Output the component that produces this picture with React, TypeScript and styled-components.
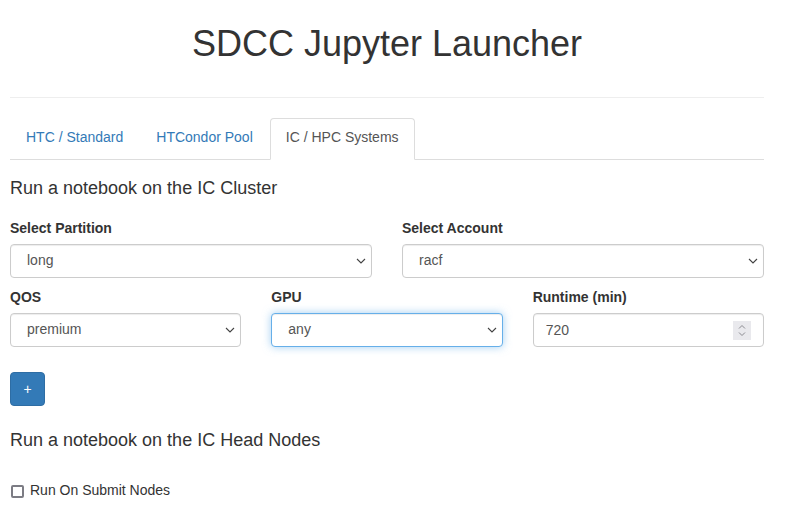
import React from "react";
import styled, { createGlobalStyle, css } from "styled-components";

const Global = createGlobalStyle`
  html, body { margin: 0; padding: 0; background: #fff; }
  body {
    font-family: "Liberation Sans", Arial, sans-serif;
    font-size: 14px;
    line-height: 1.42857;
    color: #333;
  }
  * { box-sizing: border-box; }
`;

const chevron =
  "url(\"data:image/svg+xml;utf8,<svg xmlns='http://www.w3.org/2000/svg' width='10' height='6' viewBox='0 0 10 6'><path d='M1 1l4 4 4-4' fill='none' stroke='%23444' stroke-width='1.1'/></svg>\")";

const Container = styled.div`
  width: 754px;
  margin-left: 10px;
`;

const Title = styled.h1`
  margin: 24px 0 0;
  font-size: 36px;
  font-weight: 500;
  line-height: 40px;
  text-align: center;
  color: #333;
`;

const Rule = styled.hr`
  margin: 33px 0 20px;
  border: 0;
  border-top: 1px solid #eee;
  height: 0;
`;

const Tabs = styled.ul`
  list-style: none;
  margin: 0;
  padding: 0;
  display: flex;
  border-bottom: 1px solid #ddd;
`;

const Tab = styled.li<{ $active?: boolean }>`
  margin: 0 1px -1px 0;
  a {
    display: block;
    padding: 8px 15px 12px;
    line-height: 20px;
    border: 1px solid transparent;
    border-radius: 4px 4px 0 0;
    color: #337ab7;
    text-decoration: none;
    ${(p) =>
      p.$active &&
      css`
        color: #555;
        background: #fff;
        border-color: #ddd #ddd transparent;
      `}
  }
`;

const Section = styled.h4`
  margin: 18px 0 20px;
  font-size: 18px;
  font-weight: 500;
  line-height: 20px;
`;

const Row = styled.div<{ $cols: number }>`
  display: grid;
  grid-template-columns: repeat(${(p) => p.$cols}, 1fr);
  column-gap: 30px;
  margin-bottom: 9px;
`;

const Label = styled.label`
  display: block;
  font-weight: 700;
  margin-bottom: 6px;
  line-height: 20px;
`;

const controlBase = css`
  display: block;
  width: 100%;
  height: 34px;
  font-family: "Liberation Sans", Arial, sans-serif;
  font-size: 14px;
  color: #555;
  background-color: #fff;
  border: 1px solid #ccc;
  border-radius: 4px;
  box-shadow: inset 0 1px 1px rgba(0, 0, 0, 0.075);
  outline: none;
`;

const Select = styled.select<{ $focused?: boolean }>`
  ${controlBase}
  appearance: none;
  -webkit-appearance: none;
  padding: 5px 24px 7px 16px;
  background-image: ${chevron};
  background-repeat: no-repeat;
  background-position: right 5px center;
  background-size: 10px 6px;
  ${(p) =>
    p.$focused &&
    css`
      border-color: #66afe9;
      box-shadow: inset 0 1px 1px rgba(0, 0, 0, 0.075), 0 0 8px rgba(102, 175, 233, 0.6);
    `}
`;

const NumberBox = styled.div`
  ${controlBase}
  display: flex;
  align-items: center;
  padding: 0 12px 0 12px;
`;

const NumberInput = styled.input`
  flex: 1;
  min-width: 0;
  border: 0;
  outline: none;
  padding: 0;
  font-family: "Liberation Sans", Arial, sans-serif;
  font-size: 14px;
  color: #555;
  background: transparent;
  appearance: textfield;
  -moz-appearance: textfield;
  &::-webkit-inner-spin-button,
  &::-webkit-outer-spin-button {
    -webkit-appearance: none;
    margin: 0;
  }
`;

const Spinner = styled.span`
  display: flex;
  align-items: center;
  justify-content: center;
  width: 18px;
  height: 19px;
  background: #e9e9ed;
  svg { display: block; }
`;

const AddButton = styled.button`
  margin-top: 16px;
  width: 35px;
  height: 34px;
  padding: 6px 12px;
  font-family: "Liberation Sans", Arial, sans-serif;
  font-size: 14px;
  color: #fff;
  background: #337ab7;
  border: 1px solid #2e6da4;
  border-radius: 4px;
`;

const Section2 = styled(Section)`
  margin: 24px 0 30px;
`;

const CheckRow = styled.label`
  display: flex;
  align-items: center;
  gap: 6px;
  line-height: 20px;
`;

const Check = styled.input`
  appearance: none;
  -webkit-appearance: none;
  margin: 3px 0 0 1px;
  width: 13px;
  height: 13px;
  border: 2px solid #7c7c84;
  border-radius: 2px;
  background: #fff;
`;

export default function App() {
  return (
    <>
      <Global />
      <Container>
        <Title>SDCC Jupyter Launcher</Title>
        <Rule />
        <Tabs>
          <Tab><a href="#">HTC / Standard</a></Tab>
          <Tab><a href="#">HTCondor Pool</a></Tab>
          <Tab $active><a href="#">IC / HPC Systems</a></Tab>
        </Tabs>
        <Section>Run a notebook on the IC Cluster</Section>
        <Row $cols={2}>
          <div>
            <Label>Select Partition</Label>
            <Select defaultValue="long">
              <option value="long">long</option>
            </Select>
          </div>
          <div>
            <Label>Select Account</Label>
            <Select defaultValue="racf">
              <option value="racf">racf</option>
            </Select>
          </div>
        </Row>
        <Row $cols={3}>
          <div>
            <Label>QOS</Label>
            <Select defaultValue="premium">
              <option value="premium">premium</option>
            </Select>
          </div>
          <div>
            <Label>GPU</Label>
            <Select $focused defaultValue="any">
              <option value="any">any</option>
            </Select>
          </div>
          <div>
            <Label>Runtime (min)</Label>
            <NumberBox>
              <NumberInput type="number" defaultValue={720} />
              <Spinner>
                <svg width="8" height="13" viewBox="0 0 8 13">
                  <path d="M1 4.5l3-3 3 3M1 8.5l3 3 3-3" fill="none" stroke="#8a8a90" strokeWidth="1" />
                </svg>
              </Spinner>
            </NumberBox>
          </div>
        </Row>
        <AddButton>+</AddButton>
        <Section2>Run a notebook on the IC Head Nodes</Section2>
        <CheckRow>
          <Check type="checkbox" />
          Run On Submit Nodes
        </CheckRow>
      </Container>
    </>
  );
}
